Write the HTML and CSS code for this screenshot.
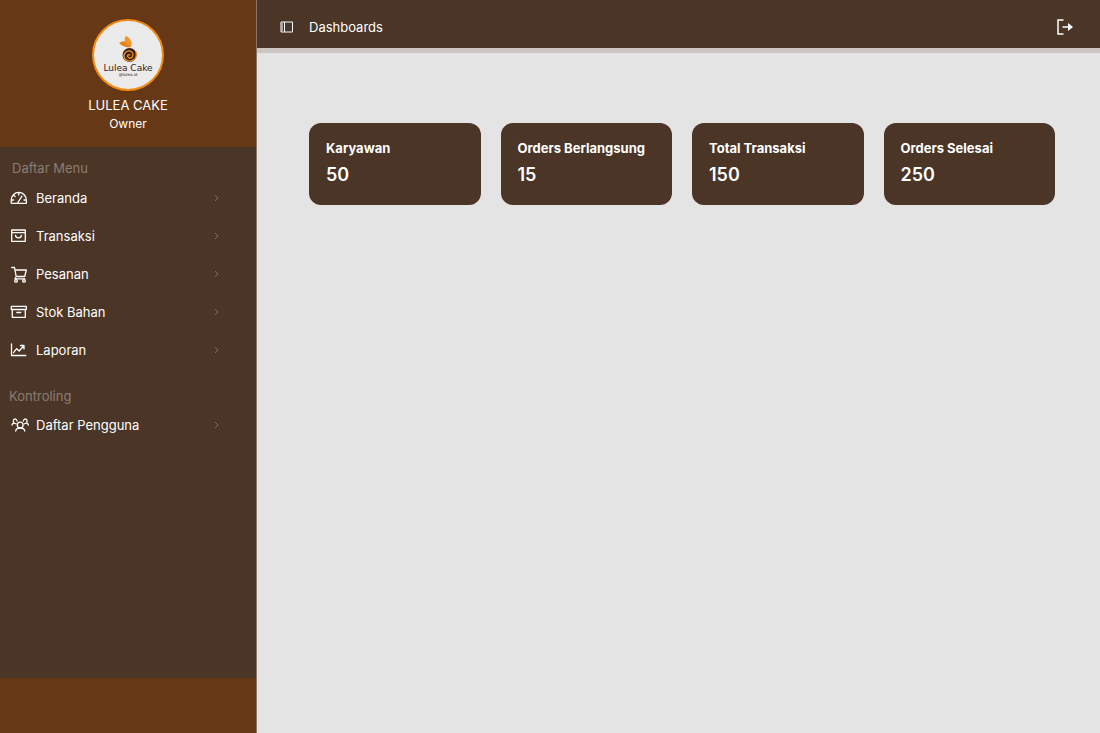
FILE: index.html
```html
<!DOCTYPE html>
<html lang="id">
<head>
<meta charset="utf-8">
<meta name="viewport" content="width=device-width, initial-scale=1">
<title>Lulea Cake</title>
<link rel="stylesheet" href="styles.css">
</head>
<body>
<div class="app">
  <aside class="sidebar">
    <header class="profile">
      <svg class="logo" viewBox="0 0 72 72" role="img" aria-label="Lulea Cake">
        <circle cx="36" cy="36" r="35" fill="#ebebeb" stroke="#f08a12" stroke-width="2"/>
        <path d="M39 28C36 22 32 21 27 24C30 27 34 29 39 28Z" fill="#e8821e"/>
        <path d="M39 28C33 24 31 20 34 17C38 19 41 23 39 28Z" fill="#f0962c"/>
        <circle cx="37.500" cy="36" r="7" fill="#3a2012"/>
        <path d="M44 33C46 40 38 45 33 40C30 36 34 31 38 32C43 34 41 40 37 39C34 37 36 35 38 36" fill="none" stroke="#f0962c" stroke-width="1.300" stroke-linecap="round"/>
        <text class="logo-name" x="36" y="52" text-anchor="middle">Lulea Cake</text>
        <text class="logo-handle" x="36" y="57" text-anchor="middle">@lulea.id</text>
      </svg>
      <div class="profile-name">LULEA CAKE</div>
      <div class="profile-role">Owner</div>
    </header>
    <nav class="menu">
      <h2 class="menu-title menu-title-main">Daftar Menu</h2>
      <ul class="menu-list">
        <li><a class="menu-link" href="#beranda">
          <svg class="icon" viewBox="0 0 18 18"><path d="M1.200 13.800V11.500C1.200 6.800 4.600 3.400 8.800 3.400S16.400 6.800 16.400 11.500V13.800Q16.400 14.400 15.800 14.400H1.800Q1.200 14.400 1.200 13.800ZM7.500 14L12 7.200M8.800 3.600V6M3.800 6.200L5.200 7.600M1.500 11H3.600M14 11H16.200"/></svg>
          <span class="menu-label">Beranda</span><svg class="chevron" viewBox="0 0 6 8"><path d="M1 1L4 4L1 7"/></svg></a></li>
        <li><a class="menu-link" href="#transaksi">
          <svg class="icon" viewBox="0 0 18 18"><path d="M1.700 3H15.300V14.300H1.700ZM1.700 5.700H15.300M5.500 8.300C5.800 11.800 11.200 11.800 11.500 8.300"/></svg>
          <span class="menu-label">Transaksi</span><svg class="chevron" viewBox="0 0 6 8"><path d="M1 1L4 4L1 7"/></svg></a></li>
        <li><a class="menu-link" href="#pesanan">
          <svg class="icon" viewBox="0 0 18 18"><path d="M1.800 2.500H4.500L6.200 11.500H14.700L16.300 5H5M6.200 11.500L5 13.800H15"/><circle cx="6" cy="15.900" r="1.300"/><circle cx="14" cy="15.900" r="1.300"/></svg>
          <span class="menu-label">Pesanan</span><svg class="chevron" viewBox="0 0 6 8"><path d="M1 1L4 4L1 7"/></svg></a></li>
        <li><a class="menu-link" href="#stok">
          <svg class="icon" viewBox="0 0 18 18"><path d="M1.300 3.300H16.300V6.500H1.300ZM2.300 6.500V14.300H15.300V6.500M6.800 9.500H10.700"/></svg>
          <span class="menu-label">Stok Bahan</span><svg class="chevron" viewBox="0 0 6 8"><path d="M1 1L4 4L1 7"/></svg></a></li>
        <li><a class="menu-link" href="#laporan">
          <svg class="icon" viewBox="0 0 18 18"><path d="M1.500 2.800V14.500H15.800M3.500 11.700L6.700 7.700L9.200 10L13.700 4.800M10.500 4.500H14V8"/></svg>
          <span class="menu-label">Laporan</span><svg class="chevron" viewBox="0 0 6 8"><path d="M1 1L4 4L1 7"/></svg></a></li>
      </ul>
      <h2 class="menu-title menu-title-control">Kontroling</h2>
      <ul class="menu-list">
        <li><a class="menu-link" href="#pengguna">
          <svg class="icon icon-wide" viewBox="0 0 20 18"><circle cx="10.200" cy="9" r="2.900"/><path d="M5.700 15C6.200 11 14.200 11 14.700 15M7 5C6.500 1.500 1.800 3 3.800 6.800M3.800 6.800Q2.300 7.500 2 9M3.800 6.800Q5 7.800 6.200 7.800M13.400 5C13.900 1.500 18.600 3 16.600 6.800M16.600 6.800Q18.100 7.500 18.400 9M16.600 6.800Q15.400 7.800 14.200 7.800"/></svg>
          <span class="menu-label">Daftar Pengguna</span><svg class="chevron" viewBox="0 0 6 8"><path d="M1 1L4 4L1 7"/></svg></a></li>
      </ul>
    </nav>
    <div class="sidebar-foot"></div>
  </aside>
  <div class="content">
    <header class="topbar">
      <button class="icon-button" type="button" aria-label="Menu samping">
        <svg class="panel-icon" viewBox="0 0 14 12"><path d="M1 1H12.500V11H1ZM4.500 1V11M1.500 3H3M1.500 5H3M1.500 7H3M1.500 9H3"/></svg>
      </button>
      <h1 class="page-title">Dashboards</h1>
      <button class="icon-button" type="button" aria-label="Keluar">
        <svg class="logout-icon" viewBox="0 0 18 16"><path d="M7.500 1H2V15H7.500M6.500 8H13"/><path class="arrow-head" d="M12 4L17 8L12 12Z"/></svg>
      </button>
    </header>
    <main class="cards">
      <section class="card"><h2 class="card-title">Karyawan</h2><p class="card-value">50</p></section>
      <section class="card"><h2 class="card-title">Orders Berlangsung</h2><p class="card-value">15</p></section>
      <section class="card"><h2 class="card-title">Total Transaksi</h2><p class="card-value">150</p></section>
      <section class="card"><h2 class="card-title">Orders Selesai</h2><p class="card-value">250</p></section>
    </main>
  </div>
</div>
</body>
</html>
```
FILE: styles.css
```css
* { box-sizing: border-box; }

body {
  margin: 0;
  background: #e4e4e4;
  color: #fff;
  font: 13px/18px Inter, sans-serif;
}

h1, h2, p, ul { margin: 0; padding: 0; font-weight: 400; }
ul { list-style: none; }
svg { display: block; flex: none; fill: none; stroke: #fff; }

.app {
  display: grid;
  grid-template-columns: 257px 1fr;
  min-height: 100vh;
}

.sidebar {
  display: flex;
  flex-direction: column;
  background: #4b3526;
  border-right: 1px solid #85776d;
}

.profile {
  display: flex;
  flex-direction: column;
  align-items: center;
  padding: 19px 0 14px;
  background: #663816;
}

.logo { width: 72px; height: 72px; margin-bottom: 5px; stroke: none; }
.logo-name { font: 9px "DejaVu Sans", sans-serif; fill: #3a2012; }
.logo-handle { font: 4px "DejaVu Sans", sans-serif; fill: #3a2012; }
.profile-name { font-size: 13px; }
.profile-role { font-size: 12px; line-height: 19px; }

.menu { flex: 1; padding: 12px 36px 12px 9px; }
.menu-title { font-size: 13px; line-height: 18px; color: #8c7d73; }
.menu-title-main { padding-left: 3px; }
.menu-title-control { margin-top: 18px; }
.menu-link {
  display: flex;
  align-items: center;
  height: 38px;
  padding-left: 1px;
  color: #fff;
  text-decoration: none;
}
.menu-title + .menu-list { margin-top: 2px; }
.menu-title-control + .menu-list { margin-top: 1px; }
.icon { width: 18px; height: 18px; margin-right: 8px; stroke-width: 1.3; stroke-linejoin: round; stroke-linecap: round; }
.icon-wide { width: 20px; margin-right: 6px; }
.menu-label { flex: 1; }
.chevron { width: 6px; height: 8px; stroke: #7d6d62; }

.sidebar-foot { height: 55px; background: #663816; }

.topbar {
  display: flex;
  align-items: center;
  height: 53px;
  padding: 6px 26px 0 23px;
  background: #4b3526;
  border-bottom: 5px solid #cdc5c1;
}
.icon-button { padding: 0; border: 0; background: none; cursor: pointer; }
.panel-icon { width: 14px; height: 12px; }
.page-title { flex: 1; margin-left: 15px; font-size: 13px; }
.logout-icon { width: 18px; height: 16px; stroke-width: 1.5; }
.arrow-head { fill: #fff; stroke: none; }

.cards {
  display: grid;
  grid-template-columns: repeat(4, 1fr);
  gap: 20px;
  padding: 70px 45px 24px 52px;
}
.card { padding: 16px 17px 18px; border-radius: 12px; background: #4b3526; }
.card-title { font-size: 13px; font-weight: 700; line-height: 18px; white-space: nowrap; }
.card-value { margin-top: 6px; font-size: 18px; font-weight: 600; line-height: 24px; }
```
